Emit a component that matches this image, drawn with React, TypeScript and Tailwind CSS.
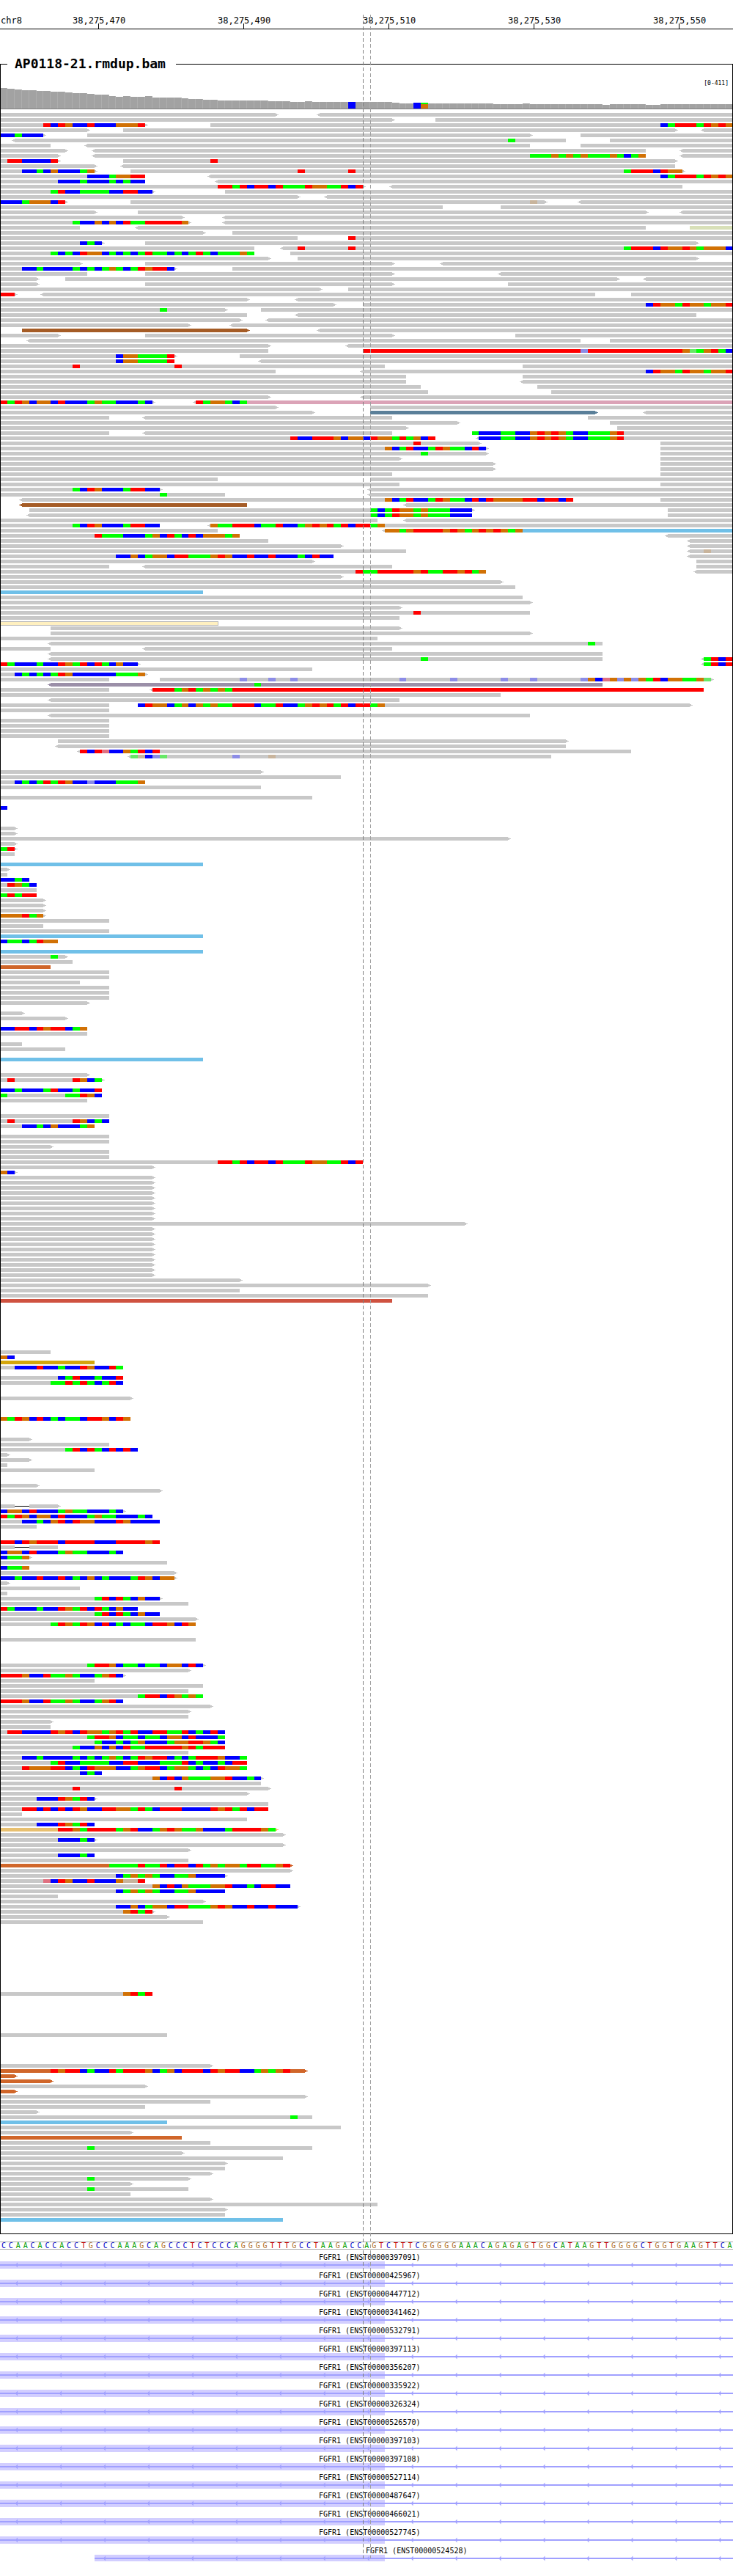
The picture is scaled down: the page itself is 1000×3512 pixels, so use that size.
import React from 'react';

const CELL = 9.9;
const PILEUP_TOP = 154;
const ROW_H = 7;
const FRAME_TOP = 88;

const BASE: Record<string, string> = {
  A: '#00ff00',
  C: '#0000ff',
  G: '#d17105',
  T: '#ff0000',
  a: '#66e866',
  c: '#8c8ce6',
  g: '#c8b49c',
  t: '#e07080',
};

const READ: Record<string, string> = {
  gr: '#c8c8c8',
  br: '#a55c26',
  lb: '#70c0e8',
  pk: '#dba3b7',
  sl: '#5a7f99',
  mv: '#9b8fa8',
  rd: '#ff0000',
  or: '#d0662a',
  gd: '#d4a60c',
  rr: '#cf5240',
  tn: '#e8c070',
  pg: '#d8e0b8',
  py: '#fff0c0',
};

const SEQ_COLOR: Record<string, string> = {
  A: 'text-[#00a000]',
  C: 'text-[#0000c8]',
  G: 'text-[#b0702a]',
  T: 'text-[#c80000]',
};

const SEQUENCE =
  'CCAACACCACCTGCCCAAAGCAGCCCTCTCCCAGGGGTTTGCCTAAGACCAGTCTTTCGGGGGAAACAGAGAGTGGCATAAGTTGGGGCTGGTGAAGTTCA';

const TICKS = ['38,275,470', '38,275,490', '38,275,510', '38,275,530', '38,275,550'];

const TRANSCRIPTS = [
  '397091', '425967', '447712', '341462', '532791', '397113', '356207', '335922',
  '326324', '526570', '397103', '397108', '527114', '487647', '466021', '527745',
];

const COVERAGE = [
  120, 121, 122, 123, 123, 124, 124, 125, 125, 126, 127, 127, 128, 129, 129, 131, 132, 131, 132, 132,
  131, 133, 133, 133, 133, 134, 135, 135, 136, 136, 137, 137, 137, 137, 137, 137, 137, 138, 138, 138,
  139, 139, 138, 139, 139, 139, 139, 139, 139, 139, 139, 139, 139, 139, 140, 141, 141, 140, 140, 141,
  141, 141, 141, 141, 141, 141, 141, 141, 142, 142, 142, 142, 141, 142, 142, 142, 142, 142, 142, 142,
  142, 142, 142, 143, 142, 142, 142, 142, 142, 143, 143, 142, 142, 142, 142, 142, 142, 142, 142, 142, 142,
];

// one entry per pileup row: a-b read, < > strand tip, @xx read colour, n:BASES mismatches from column n
const ROWS: Record<number, string> = {
  0: '0-38> <44-101',
  1: '0-54> 60-101',
  2: '0-20> 6:TCTGCCTCCCGGGT 29-101 91:CATTTATGTG',
  3: '0-12> 17-93> <97-101',
  4: '0-6> 0:CCACCC 12-73> 80-101',
  5: '<2-78 70:A 84-101',
  6: '0-7 <12-73 80-101',
  7: '0-9> <13-89 <94-101',
  8: '0-8> <13-89 73:AAAGAGAGAAAGACAG <94-101',
  9: '0-8> 1:TTCCCCT 17-93> 29:T',
  10: '0-13> <17-93',
  11: '0-13> 3:CCACGCCCAG 18-94> 41:T 48:T 86:ATTTCTGG',
  12: '0-20 12:CCCAGGTT <29-101 91:CATTTATGTG',
  13: '0-20 8:CCCACCCACACC <30-101',
  14: '0-50> 30:TTATCTTCTAAATGGAATCT <54-94',
  15: '0-21> 7:ATCCAAAACCTTCC 31-101',
  16: '0-41> <45-101',
  17: '0-9> 0:CCCAGGGCT 18-75> 73:g <80-101',
  18: '0-61 69-101',
  19: '0-13> 19-89> <94-101',
  20: '0-25> <31-101',
  21: '0-26> 10:ACCGCGCTAATTTTTG <31-101',
  22: '0-11 <19-89 95-101@pg',
  23: '0-28> 32-101',
  24: '0-41 48-101 48:T',
  25: '0-14> 11:CAC 20-96>',
  26: '0-35 <39-101 41:T 48:T 86:ATTTCTGGTGAGGGC',
  27: '0-35 7:ACACTGGCACACATAACACATACAAAGA 40-101',
  28: '0-37> 41-96>',
  29: '0-11> 20-54> <61-101',
  30: '0-24> 3:CCACCCCACACAGACATGTTC 32-101',
  31: '0-12 20-54> <69-101',
  32: '0-5> 9-85> <89-101',
  33: '0-5> 20-54> 70-101',
  34: '0-44> 48-101',
  35: '0-2> 0:TT <6-82 87-101',
  36: '0-34> <41-101',
  37: '0-46> 50-101 89:CTGGATGGAGGT',
  38: '0-31> 22:A 36-101',
  39: '0-34 <41-96',
  40: '0-33> <37-101',
  41: '0-26> <32-101',
  42: '3-34>@br <44-101',
  43: '0-8> 20-54> 71-101',
  44: '<4-80 84-101',
  45: '0-37> <48-101',
  46: '0-37 50-101@rd 80:c 94:GaAGTAC',
  47: '0-24> 16:CGGAAAAT 33-101',
  48: '0-24 16:CGGAAAAT <36-101',
  49: '0-53 10:T 24:T 72-101',
  50: '0-38 <50-101 89:CTGGATGGAGGT',
  51: '0-56 72-101',
  52: '0-56 <72-101',
  53: '0-58 74-101',
  54: '0-59 76-101',
  55: '0-37> <50-101',
  56: '0-21> 0:TATGCGGCTCCCAGAACCCAC <27-34 27:TAGGACA 34-101@pk',
  57: '0-38> 51-101',
  58: '0-43> 51-82>@sl <89-101',
  59: '0-15 <20-54 81-101',
  60: '0-63> 84-101',
  61: '0-56> 85-101',
  62: '0-15 <20-54 65-101 65:ACCCAACCGTGTGACCAAAGT',
  63: '0-60 40:TCCTTTGCGGCTGGATAGCT <66-101 66:CCCAACCGTGTGACCAAAGT',
  64: '0-66> 57:T 91-101',
  65: '0-67> 53:GCATCCATGAACTC 91-101',
  66: '0-67> 58:A 91-101',
  67: '0-55> 91-101',
  68: '0-68> 91-101',
  69: '0-68> 91-101',
  70: '0-54 91-101',
  71: '0-30 51-101',
  72: '0-55 91-101',
  73: '0-22> 10:ACTGCCCATTCC <51-101',
  74: '0-31 22:A <51-101',
  75: '<3-79 53:GCATCCATGAACTCTGGGGTTCTTCT 91-101',
  76: '<3-34@br <56-101',
  77: '4-65> 51:ACATGGAGAAACCC 92-101',
  78: '<4-65 51:ACATGGAGAAACCC 92-101',
  79: '0-52 <56-101',
  80: '0-22 10:ACTGCCCATTCC <29-101 29:GAATTTCAATCCAGTGTATCTTAG',
  81: '0-30 <53-72 53:GGAGTTTTGTGAGTGTGAG 72-101@lb',
  82: '0-33 13:TAAACCCAGCTACTCGGGAG <92-101',
  83: '0-37 <95-101',
  84: '0-47> <95-101',
  85: '0-56 <95-101 97:g',
  86: '0-46 16:CCGCAGGCTTAAAGTGCCTCCTCCCACTCC <95-101',
  87: '0-43> 96-101',
  88: '0-15 <20-54 96-101',
  89: '0-67 49:TAATTTTTGTAATTGTAG <96-101',
  90: '0-47>',
  91: '0-69>',
  92: '0-71',
  93: '0-28@lb',
  94: '0-72',
  95: '0-73>',
  96: '0-55>',
  97: '0-73 57:T',
  98: '0-55',
  99: '0-30@py',
  100: '7-55>',
  101: '7-73>',
  102: '0-52',
  103: '<7-83 81:A',
  104: '0-7 <20-54',
  105: '<7-83',
  106: '<7-83 58:A <97-101 97:ATCT',
  107: '0-19> 0:TACCCACCTGATCTACGCC <97-101 97:ATCT',
  108: '0-43',
  109: '0-20> 2:CACACATGCCCCCCAAAG',
  110: '0-15 22-98> 33:c 37:c 40:c 55:c 62:c 69:c 73:c 80:cGCtGcGcGATCGGAAGa',
  111: '<7-83@mv 35:A',
  112: '0-15 <21-32 21:TTTAGTAGAGA 32-97@rd',
  113: '0-69',
  114: '<7-55',
  115: '0-15 19-95> 19:CTGGCAGCGAGAATTTCAATCCAGTGTATCTTAG',
  116: '0-15',
  117: '<7-73',
  118: '0-15',
  119: '0-15',
  120: '0-15',
  121: '0-15',
  122: '8-78>',
  123: '<8-78',
  124: '<11-87 11:TCTtCCGATCT',
  125: '<18-76 18:agCca 32:c 37:g',
  128: '0-36>',
  129: '0-47',
  130: '0-20 2:CACATATGCCcCCCAAAG',
  131: '0-36',
  133: '0-43',
  135: '0-1 0:C',
  139: '0-2>',
  140: '0-2>',
  141: '0-70>',
  142: '0-2>',
  143: '0-2> 0:AT',
  144: '0-2',
  146: '0-28@lb',
  147: '0-1>',
  148: '0-1',
  149: '0-4 0:CCAC',
  150: '0-5 1:TGAC',
  151: '0-5',
  152: '0-5 0:ATATT',
  153: '0-6>',
  154: '0-6>',
  155: '0-6>',
  156: '0-6> 0:GGGTAG',
  157: '0-15',
  158: '0-6',
  159: '0-15',
  160: '0-28@lb',
  161: '0-8 0:CAACATGG',
  163: '0-28@lb',
  164: '0-9> 7:A',
  165: '0-10',
  166: '0-7@or',
  167: '0-15',
  168: '0-15',
  169: '0-11',
  170: '0-15',
  171: '0-15',
  172: '0-15',
  173: '0-12>',
  175: '0-3>',
  176: '0-9>',
  178: '0-12 0:CCTTCTGTTCAG',
  179: '0-12',
  181: '0-3',
  182: '0-9',
  184: '0-28@lb',
  187: '0-12>',
  188: '0-14> 1:T 10:TGCA',
  190: '0-14 0:CCACCCATCCACCT',
  191: '0-14 0:A 9:AATGC',
  192: '0-12',
  195: '0-15',
  196: '0-15 1:T 10:TGCAC',
  197: '0-13 3:CCACGCCCAG',
  199: '0-15',
  200: '0-15',
  201: '0-7>',
  202: '0-15',
  203: '0-15',
  204: '0-50 30:TTATCTTCTAAATGGAATCT',
  205: '0-21>',
  206: '0-2> 0:GC',
  207: '0-21>',
  208: '0-21>',
  209: '0-21>',
  210: '0-21>',
  211: '0-21>',
  212: '0-21>',
  213: '0-21>',
  214: '0-21>',
  215: '0-21>',
  216: '0-64>',
  217: '0-21>',
  218: '0-21>',
  219: '0-21>',
  220: '0-21>',
  221: '0-21>',
  222: '0-21>',
  223: '0-21>',
  224: '0-21>',
  225: '0-21>',
  226: '0-21>',
  227: '0-33>',
  228: '0-59>',
  229: '0-33',
  230: '0-59',
  231: '0-54@rr',
  241: '0-7',
  242: '0-2 0:GC',
  243: '0-13@gd',
  244: '0-17 2:CCCTCCACCTGCCTA',
  246: '0-17 8:CATCCACCT',
  247: '0-17 7:AATATACATC',
  250: '0-18>',
  254: '0-18 0:GATGCTCACAACTTGCTG',
  258: '0-4>',
  259: '0-15',
  260: '0-19 9:ATCTACTCTC',
  261: '0-1>',
  262: '0-4>',
  263: '0-1',
  264: '0-13',
  267: '0-5>',
  268: '0-22>',
  271: '0-8> 2-4@dl',
  272: '0-17> 0:CGGCTCCCAGAACCCAC',
  273: '0-21 0:TATGCGGCTCCCAGAACCCAC',
  274: '0-22 3:CCACGTCTGGCCCTGCCCC',
  275: '0-5',
  278: '0-22 0:TTCTGTTTCTTTTCCCTTTTGT',
  279: '0-8 2-4@dl',
  280: '0-17 0:CGGCTCCCAGAACCCAC',
  281: '0-4> 0:CAAG',
  282: '0-23',
  283: '0-4 0:CAAG',
  284: '0-24>',
  285: '0-24> 0:CCACCTCCTCACGCACCCATGCGG',
  286: '0-1>',
  287: '0-11',
  288: '0-1',
  289: '0-22> 13:ATCTACGCC',
  290: '0-26',
  291: '0-19 0:TACCCACCTGATCTACGCC',
  292: '0-22 13:ATCTACGCC',
  293: '0-27>',
  294: '0-27 7:ATGATGCTCACAACTTGCTG',
  297: '0-27',
  302: '0-28> 12:ATTGCAACAACGGCTC',
  303: '0-26>',
  304: '0-17> 0:TTTGCCTAAGACCAGTC',
  305: '0-13',
  306: '0-28',
  307: '0-26',
  308: '0-28 19:ATTCTGAGA',
  309: '0-17 0:TTTGCCTAAGACCAGTC',
  310: '0-29>',
  311: '0-26>',
  312: '0-26',
  313: '0-7>',
  314: '0-7',
  315: '0-31 1:TTCCCCTGTCTGGAGTATCCTTAATCACTC',
  316: '0-31 12:ATTGCAACAACGGCTCCCA',
  317: '0-31 13:ACCACAGCCCAGGTTGAC',
  318: '0-31 10:ACCGCGCTAATTTTTGTATTT',
  319: '0-26',
  320: '0-34 3:CCACCCCACACAGACATGTTCACATTTGCCA',
  321: '0-34 7:ATCCAAAACCTTCCCAAATCACCACTT',
  322: '0-34 3:TGGGTTCACTGGGCCAGTTCAGGACACTGGA',
  323: '0-14 11:CAC',
  324: '0-36> 21:GCTCGAAAGGTCCAC',
  325: '0-36',
  326: '0-37> 10:T 24:T',
  327: '0-34>',
  328: '0-13> 5:CCCTGATC',
  329: '0-37',
  330: '0-37 3:TTCTCTCTGCCTTGGATACTTTCCCCTGTATCTT',
  331: '0-3',
  332: '0-34',
  333: '0-13 5:CCCTGATC',
  334: '0-38>@tn 8:TTGATTTTAGTCCAGTGAAGCCCATTTTGA',
  335: '0-39>',
  336: '0-13> 8:CCCAC',
  337: '0-39>',
  338: '0-26>',
  339: '0-13 8:CCCAC',
  340: '0-26',
  341: '0-40>@or 15:AAAATAATCTTCTAGAGGATTAAGT',
  342: '0-40>',
  343: '0-31> 16:CAGAGACCAAGCCCC',
  344: '0-20 6:tCTGCCTCCCGggT',
  345: '0-40 21:GCTCGAAAGGTCCACTTCC',
  346: '0-31 16:CAGAGACCAAGCCCC',
  347: '0-8',
  348: '0-28>',
  349: '0-41> 16:CCGCAGGCTTAAAGTGCCTCCTCCC',
  350: '0-21> 17:GTAT',
  351: '0-23>',
  352: '0-28',
  366: '0-21 17:GTAT',
  374: '0-23',
  380: '0-29>',
  381: '0-42>@or 7:TGTTCACCTATTTGCAGCTTTCTGTTCCAGAGT',
  382: '0-2>@or',
  383: '0-7>@or',
  384: '0-20>',
  385: '0-2>@or',
  386: '0-42>',
  387: '0-29',
  388: '0-20',
  389: '0-5>',
  390: '0-43 40:A',
  391: '0-23@lb',
  392: '0-47',
  393: '0-18>',
  394: '0-25@or',
  395: '0-29',
  396: '0-43 12:A',
  397: '0-25>',
  398: '0-39',
  399: '0-31>',
  400: '0-31',
  401: '0-29>',
  402: '0-26> 12:A',
  403: '0-18>',
  404: '0-26 12:A',
  405: '0-18',
  406: '0-29>',
  407: '0-52',
  408: '0-31>',
  409: '0-31',
  410: '0-39@lb',
};

const px = (col: number) => Math.round(col * CELL);

const PileupRow: React.FC<{ row: number; spec: string }> = ({ row, spec }) => {
  const y = PILEUP_TOP + row * ROW_H - FRAME_TOP;

  return (
    <g>
      {spec.split(' ').map((token, i) => {
        const hit = token.match(/^(\d+):(\w+)$/);
        if (hit) {
          const start = Number(hit[1]);
          return [...hit[2]].map((base, j) => (
            <rect
              key={`${i}-${j}`}
              x={px(start + j)}
              y={y}
              width={px(start + j + 1) - px(start + j)}
              height={5}
              fill={BASE[base]}
            />
          ));
        }

        const read = token.match(/^(<?)(\d+)-(\d+)(>?)(?:@(\w+))?$/);
        if (!read) return null;
        const x1 = px(Number(read[2]));
        const x2 = px(Number(read[3]));

        if (read[5] === 'dl') {
          return (
            <g key={i}>
              <rect x={x1} y={y} width={x2 - x1} height={5} fill="#fff" />
              <rect x={x1} y={y + 2} width={x2 - x1} height={1} fill="#000" />
            </g>
          );
        }

        const fill = READ[read[5] ?? 'gr'];
        return (
          <g key={i} fill={fill}>
            <rect
              x={x1}
              y={y}
              width={x2 - x1}
              height={5}
              stroke={read[5] === 'py' ? '#b8b8b8' : undefined}
              strokeWidth={read[5] === 'py' ? 1 : undefined}
            />
            {read[1] && <rect x={x1 - 2} y={y + 1} width={2} height={3} />}
            {read[1] && <rect x={x1 - 4} y={y + 2} width={2} height={1} />}
            {read[4] && <rect x={x2} y={y + 1} width={2} height={3} />}
            {read[4] && <rect x={x2 + 2} y={y + 2} width={2} height={1} />}
          </g>
        );
      })}
    </g>
  );
};

const Coverage: React.FC = () => (
  <g>
    {COVERAGE.map((top, col) => {
      const x = px(col);
      const w = px(col + 1) - x;
      const y = top - FRAME_TOP;
      const h = 148 - top;
      return (
        <g key={col}>
          <rect x={x} y={y} width={w} height={h} fill="#aeaeae" />
          <rect x={x} y={y} width={w - 1} height={h} fill="#a2a2a2" />
        </g>
      );
    })}
    <rect x={px(48)} y={139 - FRAME_TOP} width={10} height={9} fill="#0000ff" />
    <rect x={px(57)} y={140 - FRAME_TOP} width={10} height={8} fill="#0000ff" />
    <rect x={px(58)} y={140 - FRAME_TOP} width={10} height={2} fill="#00ff00" />
    <rect x={px(58)} y={142 - FRAME_TOP} width={10} height={6} fill="#d17105" />
    <rect x={0} y={148 - FRAME_TOP} width={1000} height={1} fill="#808080" />
  </g>
);

const GeneRow: React.FC<{ id: string; labelClass: string; from?: number; exonH?: number }> = ({
  id,
  labelClass,
  from = 0,
  exonH = 10,
}) => {
  const chevrons = Array.from({ length: 17 }, (_, i) => 23 + i * 59.95).filter((x) => x > from);

  return (
    <div className="h-[25px]">
      <div className={`h-[10px] text-[10px] leading-[10px] text-black ${labelClass}`}>FGFR1 (ENST00000{id})</div>
      <svg width={1000} height={12} className="block">
        <rect x={from} y={0} width={525 - from} height={exonH} fill="#d2ceff" />
        <rect x={from} y={4} width={1000 - from} height={2} fill="#a0a0ff" />
        {chevrons.map((x) => (
          <path key={x} d={`M${x - 2} 5 L${x + 1} 1.5 L${x + 1} 8.5 Z`} fill="#a0a0ff" />
        ))}
      </svg>
    </div>
  );
};

const App: React.FC = () => {
  return (
    <div className="relative h-[3512px] w-[1000px] overflow-hidden bg-white font-['DejaVu_Sans_Mono',monospace] text-black">
      <div className="flex h-[40px] items-start border-b border-black pt-[20px] text-[12px] leading-[16px]">
        <div className="w-[99px] shrink-0 pl-px">chr8</div>
        {TICKS.map((tick) => (
          <div key={tick} className="relative h-[19px] w-[198px] shrink-0">
            {tick}
            <div className="absolute bottom-0 left-[35px] h-[7px] w-px bg-black" />
          </div>
        ))}
      </div>

      <div className="relative mt-[47px] h-[2959px] border border-black">
        <div className="absolute -top-[13px] left-[9px] bg-white pl-[10px] pr-[14px] text-[18px] font-bold leading-[24px]">
          AP0118-21.rmdup.bam
        </div>
        <div className="absolute right-[5px] top-[21px] text-[8px] leading-[10px]">[0-411]</div>
        <svg width={998} height={2957} viewBox="1 0 998 2957" shapeRendering="crispEdges" className="block">
          <Coverage />
          {Object.entries(ROWS).map(([row, spec]) => (
            <PileupRow key={row} row={Number(row)} spec={spec} />
          ))}
        </svg>
      </div>

      <div className="mt-[10px] flex h-[11px] items-center border-y border-[#aaaaaa] text-[10px] leading-[9px]">
        {[...SEQUENCE].map((base, i) => (
          <div key={i} className={`flex-1 text-center ${SEQ_COLOR[base]}`}>
            {base}
          </div>
        ))}
      </div>

      <div className="mt-[6px]">
        {TRANSCRIPTS.map((id) => (
          <GeneRow key={id} id={id} labelClass="pl-[435px]" />
        ))}
        <GeneRow id="524528" labelClass="pl-[499px]" from={129} exonH={9} />
      </div>

      {/* candidate site guide lines run over every track */}
      <svg width={1000} height={3512} className="pointer-events-none absolute left-0 top-0">
        <line x1={495.5} y1={20} x2={495.5} y2={3488} stroke="#808080" strokeDasharray="5 3" />
        <line x1={505.5} y1={20} x2={505.5} y2={3488} stroke="#a0a0a0" strokeDasharray="5 3" />
      </svg>
    </div>
  );
};

export default App;
